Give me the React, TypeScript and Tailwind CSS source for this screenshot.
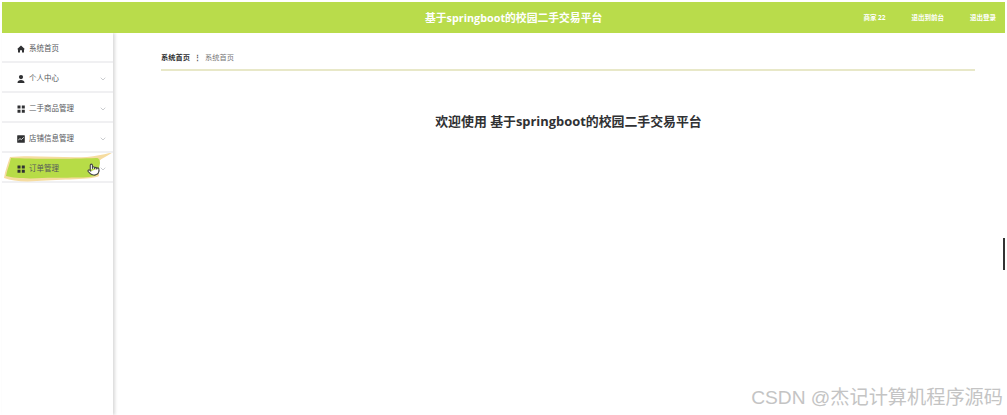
import { ChevronDown, Pointer } from "lucide-react";

const cjk = "font-['Open_Sans','Noto_Sans_CJK_SC',sans-serif]";

const menuItems = [
  { label: "系统首页", icon: "home", arrow: false },
  { label: "个人中心", icon: "user", arrow: true },
  { label: "二手商品管理", icon: "grid", arrow: true },
  { label: "店铺信息管理", icon: "chart", arrow: true },
  { label: "订单管理", icon: "grid", arrow: true, active: true },
];

function MenuIcon({ name }: { name: string }) {
  return (
    <svg width="8" height="8" viewBox="0 0 8 8" fill="#303133">
      {name === "home" && <path d="M4 0.5 L8 4.2 L7 4.2 L7 7.5 L5 7.5 L5 5.2 L3 5.2 L3 7.5 L1 7.5 L1 4.2 L0 4.2 Z" />}
      {name === "user" && <path d="M4 0 A2 2 0 1 1 4 4.2 A2 2 0 1 1 4 0 Z M0.5 8 C0.5 5.8 2 5 4 5 C6 5 7.5 5.8 7.5 8 Z" />}
      {name === "grid" && <path d="M0.5 0.5 H3.5 V3.5 H0.5 Z M4.8 0.5 H7.8 V3.5 H4.8 Z M0.5 4.8 H3.5 V7.8 H0.5 Z M4.8 4.8 H7.8 V7.8 H4.8 Z" />}
      {name === "chart" && (
        <>
          <rect x="0.2" y="0.2" width="7.6" height="7.6" rx="0.5" />
          <path d="M1.3 5 L3 3.6 L4.3 4.6 L6.7 2.4" fill="none" stroke="#fff" strokeWidth="0.8" />
        </>
      )}
    </svg>
  );
}

function BrushBackground() {
  return (
    <svg className="absolute left-0 top-0 h-[30px] w-[111px]" viewBox="0 0 111 30">
      <path d="M8 4 C30 2 60 5 85 4 C95 3 104 1 111 -1 C106 3 100 5 97 8 L97 23 C90 27 60 26 35 28 C22 29 10 28 2 25 C3 18 6 10 8 4 Z" fill="#f6dca0" />
      <path d="M9 5 C30 6 70 6 94 5 C97 5 98 7 98 10 L96 21 C92 26 70 24 40 25 C25 26 12 25 4 23 C5 17 8 10 9 5 Z" fill="#b7dc47" />
    </svg>
  );
}

function SideMenu() {
  return (
    <aside className="flex w-[111px] shrink-0 flex-col bg-white shadow-[2px_0_3px_rgba(0,0,0,0.15)]">
      {menuItems.map((item) => (
        <div key={item.label} className="relative flex h-[30px] items-center border-b-2 border-[#f0f0f2] pl-[15px] pr-[6px] pt-[3px]">
          {item.active && <BrushBackground />}
          <span className="relative flex w-[8px] justify-center"><MenuIcon name={item.icon} /></span>
          <span className="relative ml-[4px] text-[7.5px] text-[#55575b]">{item.label}</span>
          {item.arrow && <ChevronDown size={8} className="relative ml-auto text-[#b0b3b8]" />}
          {item.active && <Pointer size={13} className="absolute left-[85px] top-[10px] text-[#444]" fill="#fff" />}
        </div>
      ))}
    </aside>
  );
}

export default function App() {
  return (
    <div className={`relative flex h-[415px] w-[1007px] flex-col overflow-hidden bg-white pl-[2px] pr-[2px] pt-[2px] ${cjk}`}>
      <header className="relative flex h-[31px] shrink-0 items-center justify-end gap-[26px] bg-[#b9dc4b] pr-[9px] text-[6.5px] font-bold text-white">
        <h1 className="absolute left-[423px] top-[8px] text-[10.8px] leading-[15px] font-bold">基于springboot的校园二手交易平台</h1>
        <span>商家 22</span>
        <span>退出到前台</span>
        <span>退出登录</span>
      </header>
      <div className="flex flex-1">
        <SideMenu />
        <main className="flex-1 pl-[48px] pr-[30px] pt-[16px]">
          <div className="flex h-[22px] items-center border-b-2 border-[#e8e8c8] pb-[3px] text-[7.25px]">
            <span className="font-bold text-[#303133]">系统首页</span>
            <span className="mx-[4px] font-bold text-[#555]">⋮</span>
            <span className="text-[#777]">系统首页</span>
          </div>
          <h2 className="mt-[41px] pl-[1px] text-center text-[12.9px] leading-[18px] font-bold text-[#303133]">欢迎使用 基于springboot的校园二手交易平台</h2>
        </main>
      </div>
      <div className="absolute right-[2px] top-[238px] h-[32px] w-[2px] bg-[#333]" />
      <div className="absolute bottom-[6px] right-[4px] font-['Liberation_Sans','Noto_Sans_CJK_SC',sans-serif] text-[19.2px] leading-[22px] text-[#c4c4c4]">CSDN @杰记计算机程序源码</div>
    </div>
  );
}
